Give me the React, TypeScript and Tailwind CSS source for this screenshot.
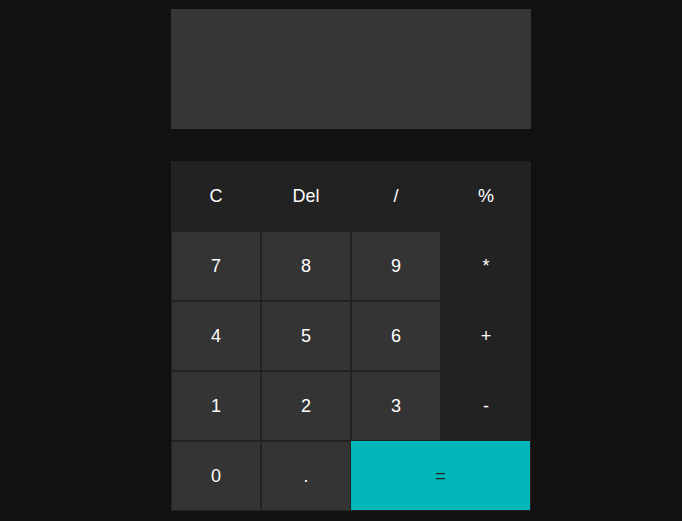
const keys: { label: string; kind: "op" | "num" | "eq" }[] = [
  { label: "C", kind: "op" },
  { label: "Del", kind: "op" },
  { label: "/", kind: "op" },
  { label: "%", kind: "op" },
  { label: "7", kind: "num" },
  { label: "8", kind: "num" },
  { label: "9", kind: "num" },
  { label: "*", kind: "op" },
  { label: "4", kind: "num" },
  { label: "5", kind: "num" },
  { label: "6", kind: "num" },
  { label: "+", kind: "op" },
  { label: "1", kind: "num" },
  { label: "2", kind: "num" },
  { label: "3", kind: "num" },
  { label: "-", kind: "op" },
  { label: "0", kind: "num" },
  { label: ".", kind: "num" },
  { label: "=", kind: "eq" },
];

function Key({ label, kind }: { label: string; kind: "op" | "num" | "eq" }) {
  if (kind === "eq") {
    return (
      <button className="col-span-2 h-[70px] bg-[#00b6b9] text-[#222] text-lg border-r border-b border-[#222]">
        {label}
      </button>
    );
  }
  return (
    <button
      className={
        kind === "num"
          ? "h-[70px] bg-[#343434] text-white text-lg border border-[#222]"
          : "h-[70px] bg-[#222] text-white text-lg border border-[#222]"
      }
    >
      {label}
    </button>
  );
}

export default function App() {
  return (
    <div
      className="min-h-[521px] bg-[#111] flex justify-center pl-[20px] pt-[9px]"
      style={{ fontFamily: '"Liberation Sans", Arial, sans-serif' }}
    >
      <div className="w-[360px] flex flex-col gap-8">
        <div className="h-[120px] bg-[#363636]"></div>
        <div className="grid grid-cols-4 bg-[#222]">
          {keys.map((k) => (
            <Key key={k.label} label={k.label} kind={k.kind} />
          ))}
        </div>
      </div>
    </div>
  );
}
